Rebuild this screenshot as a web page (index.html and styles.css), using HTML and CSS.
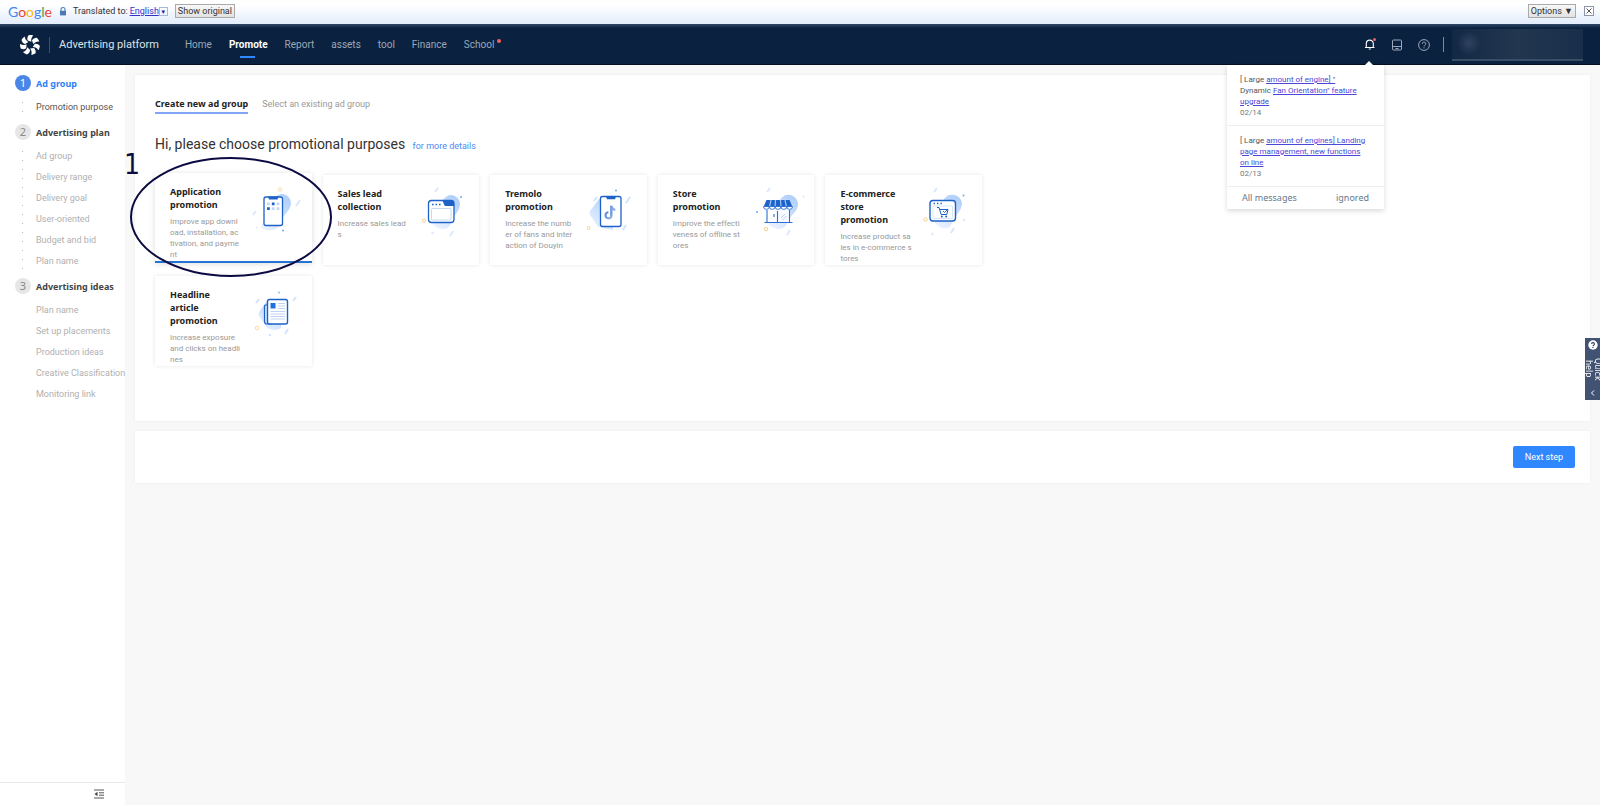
FILE: index.html
```html
<!DOCTYPE html>
<html lang="en">
<head>
    <meta charset="UTF-8">
    <title>Advertising platform</title>
    <link rel="stylesheet" href="styles.css">
</head>
<body>
    <div class="translate-bar">
        <span class="google"><span class="g-blue">G</span><span class="g-red">o</span><span class="g-yellow">o</span><span class="g-blue">g</span><span class="g-green">l</span><span class="g-red">e</span></span>
        <svg class="lock" viewBox="0 0 8 9"><path d="M2 4V2.500a2 2 0 0 1 4 0V4" fill="none" stroke="#5b86bd" stroke-width="1.200"/><rect x="1" y="3.800" width="6" height="4.600" fill="#4a79b5"/></svg>
        <span>Translated to:</span>
        <a class="language" href="#">English</a><button class="arrow" aria-label="Choose language">▼</button>
        <button class="gray-button">Show original</button>
        <button class="gray-button options">Options ▼</button>
        <button class="close" aria-label="Close"><svg viewBox="0 0 10 10"><rect x=".5" y=".5" width="9" height="9" fill="#fff" stroke="#8b96a8"/><path d="M2.500 2.500l5 5M7.500 2.500l-5 5" stroke="#555"/></svg></button>
    </div>

    <header class="header">
        <svg class="logo" viewBox="0 0 20 20">
            <defs><path id="blade" d="M8.600.2C10 0 11.800 0 13.200.6 11.400 2.400 10.900 4.500 11.400 6.800L7.700 5.600C7 3.600 7.300 1.700 8.600.2z"/></defs>
            <g fill="#fff">
                <use href="#blade"/>
                <use href="#blade" transform="rotate(51 10 10)"/>
                <use href="#blade" transform="rotate(103 10 10)"/>
                <use href="#blade" transform="rotate(154 10 10)"/>
                <use href="#blade" transform="rotate(206 10 10)"/>
                <use href="#blade" transform="rotate(257 10 10)"/>
                <use href="#blade" transform="rotate(309 10 10)"/>
            </g>
        </svg>
        <span class="brand">Advertising platform</span>
        <nav class="nav">
            <a href="#">Home</a>
            <a class="active" href="#">Promote</a>
            <a href="#">Report</a>
            <a href="#">assets</a>
            <a href="#">tool</a>
            <a href="#">Finance</a>
            <a class="has-dot" href="#">School</a>
        </nav>
        <div class="tools">
            <div class="bell">
                <button class="icon-button" aria-label="Messages">
                    <svg viewBox="0 0 12 12" fill="none" stroke="#fff" stroke-width="1.100"><path d="M1 9.500h9.500M2.300 9.500V5.600a3.500 3.500 0 0 1 7 0v3.900M4.800 11h2"/><circle cx="10.500" cy="1.500" r="1.500" fill="#f0605d" stroke="none"/></svg>
                </button>
                <div class="messages">
                    <div class="message">
                        [ Large <a href="#">amount of engine] "</a><br>Dynamic <a href="#">Fan Orientation" feature<br>upgrade</a>
                        <time>02/14</time>
                    </div>
                    <div class="message">
                        [ Large <a href="#">amount of engines] Landing<br>page management, new functions<br>on line</a>
                        <time>02/13</time>
                    </div>
                    <div class="messages-footer">
                        <a href="#">All messages</a>
                        <a href="#">ignored</a>
                    </div>
                </div>
            </div>
            <button class="icon-button" aria-label="Library">
                <svg viewBox="0 0 12 12" fill="none" stroke="#9ca8b7"><rect x="1.500" y="1" width="9" height="10" rx="1"/><path d="M1.500 7.500h9M4.500 9.500h3"/></svg>
            </button>
            <button class="icon-button" aria-label="Help">
                <svg viewBox="0 0 12 12" fill="none" stroke="#9ca8b7"><circle cx="6" cy="6" r="5.400"/><path d="M4.300 4.900a1.700 1.700 0 1 1 2.500 1.400c-.6.300-.8.600-.8 1.100M6 8.300v1"/></svg>
            </button>
            <div class="account"></div>
        </div>
    </header>

    <div class="layout">
        <aside class="sidebar">
            <div class="steps">
                <section class="step current">
                    <h2><span class="badge">1</span>Ad group</h2>
                    <ul class="dotted">
                        <li class="selected">Promotion purpose</li>
                    </ul>
                </section>
                <section class="step">
                    <h2><span class="badge">2</span>Advertising plan</h2>
                    <ul class="dotted">
                        <li>Ad group</li>
                        <li>Delivery range</li>
                        <li>Delivery goal</li>
                        <li>User-oriented</li>
                        <li>Budget and bid</li>
                        <li>Plan name</li>
                    </ul>
                </section>
                <section class="step">
                    <h2><span class="badge">3</span>Advertising ideas</h2>
                    <ul>
                        <li>Plan name</li>
                        <li>Set up placements</li>
                        <li>Production ideas</li>
                        <li>Creative Classification</li>
                        <li>Monitoring link</li>
                    </ul>
                </section>
            </div>
            <div class="sidebar-footer">
                <button class="collapse" aria-label="Collapse menu">
                    <svg viewBox="0 0 10 10"><path d="M0 1h10M5 3.800h5M5 6.200h5M0 9h10" stroke="#555"/><path d="M3.500 2.800v4.400L.5 5z" fill="#444"/></svg>
                </button>
            </div>
        </aside>

        <main class="content">
            <section class="panel">
                <div class="tabs">
                    <button class="tab active">Create new ad group</button>
                    <button class="tab">Select an existing ad group</button>
                </div>
                <h1>Hi, please choose promotional purposes <a href="#">for more details</a></h1>

                <ul class="cards">
                    <li class="lifted">
                        <button class="card selected">
                            <span class="card-text">
                                <strong>Application<br>promotion</strong>
                                <span>Improve app downl<br>oad, installation, ac<br>tivation, and payme<br>nt</span>
                            </span>
                            <svg viewBox="0 0 50 50" fill="none">
                                <defs>
                                    <linearGradient id="haze" x1="0" y1="1" x2=".6" y2="0"><stop offset="0" stop-color="#f0f6ff"/><stop offset="1" stop-color="#b4d1fb"/></linearGradient>
                                </defs>
                                <path d="M22 14a9 9 0 0 1 17 4c0 8-9 12-11 21-2 7-15 9-19 3z" fill="url(#haze)"/>
                                <path d="M1 30l3-4M44 21l4-6M4 43l1-1" stroke="#dbe8fc" stroke-width="2"/>
                                <circle cx="28" cy="4.500" r="1.700" stroke="#fadca6"/>
                                <circle cx="31" cy="45.500" r="1" fill="#6faaf3"/>
                                <rect x="12" y="12" width="18.500" height="28.500" rx="2" fill="#fff" stroke="#1c62c8" stroke-width="1.300"/>
                                <path d="M16 11.500h10.500l-1 3h-8.500z" fill="#1c62c8"/>
                                <path d="M15 17.500h2.800v2.800H15zM24.600 17.500h2.800v2.800h-2.800zM19.800 22.300h2.800v2.800h-2.800zM24.600 22.300h2.800v2.800h-2.800z" fill="#c3d8f5"/>
                                <path d="M19.800 17.500h2.800v2.800h-2.800zM15 22.300h2.800v2.800H15z" fill="#1c62c8"/>
                            </svg>
                        </button>
                        <div class="mark">1</div>
                        <svg class="ring" viewBox="0 0 204 122"><ellipse cx="102" cy="61" rx="100" ry="59" fill="none" stroke="#0b0b42" stroke-width="2"/></svg>
                    </li>
                    <li>
                        <button class="card">
                            <span class="card-text">
                                <strong>Sales lead<br>collection</strong>
                                <span>Increase sales lead<br>s</span>
                            </span>
                            <svg viewBox="0 0 50 50" fill="none">
                                <path d="M23 13a9 9 0 0 1 17 4c0 8-7 11-9 19-2 8-13 8-18 1z" fill="url(#haze)"/>
                                <path d="M15 5l3-4M30 49l3-5M12 47l1-2" stroke="#dbe8fc" stroke-width="2"/>
                                <circle cx="4" cy="33.500" r="1.700" stroke="#f8cf8c"/>
                                <circle cx="41" cy="10" r="1" fill="#6faaf3"/>
                                <rect x="8.500" y="13.500" width="25.500" height="22" rx="3" fill="#fff" stroke="#1c62c8" stroke-width="1.300"/>
                                <path d="M22.500 13.500H31a3 3 0 0 1 3 3V19h-8c-2 0-2-2-3.500-5.500z" fill="#1c62c8"/>
                                <path d="M12 17.500h1.600M15.500 17.500h1.600M19 17.500h1.600" stroke="#1c62c8" stroke-width="1.600"/>
                                <rect x="11.500" y="21.500" width="19.500" height="11.500" rx="1" stroke="#b9cff0" stroke-width=".8"/>
                            </svg>
                        </button>
                    </li>
                    <li>
                        <button class="card">
                            <span class="card-text">
                                <strong>Tremolo<br>promotion</strong>
                                <span>Increase the numb<br>er of fans and inter<br>action of Douyin</span>
                            </span>
                            <svg viewBox="0 0 50 50" fill="none">
                                <path d="M13 11L3 24q-1 2 0 4l8 12 15 3V11z" fill="url(#haze)"/>
                                <path d="M7 14l3-4M39 16l4-6M36 43l3-5" stroke="#d3e3fc" stroke-width="2"/>
                                <circle cx="1.500" cy="41" r="1.500" stroke="#f8cf8c"/>
                                <circle cx="29" cy="3.500" r="1" fill="#6faaf3"/>
                                <rect x="13.500" y="9.500" width="20.500" height="30" rx="2" fill="#fff" stroke="#1c62c8" stroke-width="1.300"/>
                                <path d="M19 9.500h10l-1 2.800h-8z" fill="#1c62c8"/>
                                <path d="M24.500 19v9.300a3 3 0 1 1-3-3M24.500 19c.3 2.400 1.600 3.600 3.800 3.800" stroke="#8aaee5" stroke-width="2.200"/>
                                <path d="M23.900 18.500v10M21 25.200a3 3 0 0 0-1 5.500" stroke="#3c74cf" stroke-width=".8"/>
                            </svg>
                        </button>
                    </li>
                    <li>
                        <button class="card">
                            <span class="card-text">
                                <strong>Store<br>promotion</strong>
                                <span>Improve the effecti<br>veness of offline st<br>ores</span>
                            </span>
                            <svg viewBox="0 0 50 50" fill="none">
                                <path d="M25 13a9.500 9.500 0 0 1 18 4c0 8-8 11-11 19-2 8-13 8-19 1z" fill="url(#haze)"/>
                                <path d="M12 5l3-4M32 48l3-5M48 10l1-1" stroke="#dbe8fc" stroke-width="2"/>
                                <circle cx="11" cy="42" r="1.700" stroke="#f8cf8c"/>
                                <circle cx="2" cy="25" r="1" fill="#6faaf3"/>
                                <path d="M12 22h23v13H12z" fill="#fff" fill-opacity=".85"/>
                                <path d="M12 23v12M22.500 24v11M34.500 23v12M9.500 35.500h28M19 27v3" stroke="#2b6fd3" stroke-width="1.100"/>
                                <path d="M26 31l4-4M27.500 33l4-4" stroke="#9fc0f0" stroke-width=".8"/>
                                <path d="M11.500 13h23l3 7h-29z" fill="#1c62c8"/>
                                <path d="M16 13l-1.500 7M20.500 13l-.5 7M25.500 13l.5 7M30 13l1.500 7" stroke="#9fc5fb" stroke-width="1.200"/>
                                <path d="M8.500 19.500a2.900 2.900 0 0 0 5.800 0 2.900 2.900 0 0 0 5.800 0 2.900 2.900 0 0 0 5.800 0 2.900 2.900 0 0 0 5.800 0 2.900 2.900 0 0 0 5.800 0z" fill="#fff" stroke="#2b6fd3" stroke-width=".9"/>
                            </svg>
                        </button>
                    </li>
                    <li>
                        <button class="card">
                            <span class="card-text">
                                <strong>E-commerce<br>store<br>promotion</strong>
                                <span>Increase product sa<br>les in e-commerce s<br>tores</span>
                            </span>
                            <svg viewBox="0 0 50 50" fill="none">
                                <path d="M22 12a10 10 0 0 1 18 4c0 8-7 12-10 20-2 7-12 7-17 0z" fill="url(#haze)"/>
                                <path d="M12 5l3-4M29 46l3-5M10 48l1-2M41 34l2-2" stroke="#dbe8fc" stroke-width="2"/>
                                <circle cx="3.500" cy="32.500" r="1.700" stroke="#f8cf8c"/>
                                <circle cx="41.500" cy="8.500" r="1" fill="#6faaf3"/>
                                <rect x="8" y="13.500" width="25.500" height="20.500" rx="3" fill="#fff" stroke="#1c62c8" stroke-width="1.400"/>
                                <path d="M11.500 16.500h1.400M15 16.500h1.400M18.500 16.500h1.400" stroke="#1c62c8" stroke-width="1.400"/>
                                <rect x="11" y="19" width="19.500" height="12.500" rx="1" stroke="#cfdff5" stroke-width=".8"/>
                                <path d="M15 20.500h2l2.200 7h5.600l1.200-5h-8M21 24l1.500 1.500L25 23" stroke="#1c62c8"/>
                                <circle cx="19.800" cy="29.500" r="1" fill="#1c62c8"/><circle cx="24.200" cy="29.500" r="1" fill="#1c62c8"/>
                            </svg>
                        </button>
                    </li>
                    <li>
                        <button class="card">
                            <span class="card-text">
                                <strong>Headline<br>article<br>promotion</strong>
                                <span>Increase exposure<br>and clicks on headli<br>nes</span>
                            </span>
                            <svg viewBox="0 0 50 50" fill="none">
                                <path d="M15 13L7 24q-1 2 0 4l8 12q8 4 14 0V13z" fill="url(#haze)"/>
                                <path d="M4 15l3-4M41 13l3-4M33 46l3-5M18 48v-2" stroke="#d3e3fc" stroke-width="2"/>
                                <circle cx="5" cy="40" r="1.700" stroke="#fadca6"/>
                                <circle cx="27" cy="4.500" r="1" fill="#8abdf6"/>
                                <path d="M16 17h-2.500a1 1 0 0 0-1 1v15.500a2.500 2.500 0 0 0 2.500 2.500h4V17z" fill="#dbe9fd" stroke="#1c62c8" stroke-width="1.200"/>
                                <rect x="15.500" y="11.500" width="20" height="24.500" rx="2" fill="#fff" stroke="#1c62c8" stroke-width="1.400"/>
                                <path d="M18.500 15h5v5.500h-5z" fill="#1c72e0"/>
                                <path d="M26 15.500h7M26 18h7M26 20.500h7M18.500 23.500H33M18.500 26H33M18.500 28.500H33M18.500 31H33" stroke="#b9cff0" stroke-width=".9"/>
                            </svg>
                        </button>
                    </li>
                </ul>
            </section>

            <section class="panel actions">
                <button class="next">Next step</button>
            </section>
        </main>
    </div>

    <button class="quick-help">
        <svg viewBox="0 0 10 10"><circle cx="5" cy="5" r="4.700" fill="#fff"/><path d="M3.600 4a1.400 1.400 0 1 1 2 1.300c-.4.200-.6.400-.6.900M5 7v1" fill="none" stroke="#33466a" stroke-width="1.100"/></svg>
        <span>Quick<br>help</span>
        <svg class="chevron" viewBox="0 0 10 10"><path d="M6 2.500L3.500 5 6 7.500" fill="none" stroke="#fff"/></svg>
    </button>
</body>
</html>
```

FILE: styles.css
```css
* {
    box-sizing: border-box;
}

body {
    margin: 0;
    min-height: 100vh;
    display: flex;
    flex-direction: column;
    background-color: #f8f8f8;
    color: #333;
    font-family: Roboto, sans-serif;
    font-size: 9px;
}

button {
    font: inherit;
    color: inherit;
    padding: 0;
    border: none;
    background: none;
    cursor: pointer;
}

a {
    color: inherit;
    text-decoration: none;
}

ul {
    list-style: none;
    margin: 0;
    padding: 0;
}

svg {
    display: block;
    flex: none;
}

/* translate bar */
.translate-bar {
    height: 24px;
    display: flex;
    align-items: center;
    padding: 0 6px 2px 8px;
    background: linear-gradient(#fff 20%, #e2ecfb);
    font-size: 9px;
    color: #333;
}

.google {
    font-family: Lato, sans-serif;
    font-size: 14px;
    margin-right: 7px;
}

.g-blue { color: #4285f4; }
.g-red { color: #ea4335; }
.g-yellow { color: #fbbc05; }
.g-green { color: #34a853; }

.lock {
    width: 8px;
    height: 9px;
    margin-right: 6px;
}

.language {
    color: #33c;
    text-decoration: underline;
    margin-left: 2px;
}

.arrow {
    width: 9px;
    height: 9px;
    margin: 0 7px 0 0;
    border: 1px solid #a9b9de;
    color: #22a;
    font-size: 6px;
    line-height: 7px;
}

.gray-button {
    height: 14px;
    padding: 0 2px;
    border: 1px solid #aaa;
    background: linear-gradient(#f8f8f8, #e2e2e2);
}

.options {
    margin-left: auto;
}

.close svg {
    width: 10px;
    height: 10px;
    margin-left: 8px;
}

/* header */
.header {
    height: 41px;
    display: flex;
    align-items: center;
    padding: 2px 17px 0 20px;
    background: linear-gradient(#2f4866, #0a2240 4px);
    border-bottom: 1px solid #03101f;
    color: #9ca8b7;
    font-size: 10px;
}

.logo {
    width: 20px;
    height: 20px;
}

.brand {
    margin-left: 9px;
    padding-left: 9px;
    border-left: 1px solid #3d5069;
    color: #dde2e8;
    font-size: 11px;
    line-height: 16px;
}

.nav {
    display: flex;
    gap: 17px;
    margin-left: 26px;
}

.nav a {
    position: relative;
    line-height: 38px;
}

.nav .active {
    color: #fff;
    font-weight: bold;
}

.nav .active::after {
    content: "";
    position: absolute;
    left: 50%;
    bottom: 6px;
    width: 15px;
    height: 2px;
    margin-left: -8px;
    background-color: #2f88ff;
}

.nav .has-dot::after {
    content: "";
    position: absolute;
    top: 13px;
    right: -7px;
    width: 4px;
    height: 4px;
    border-radius: 50%;
    background-color: #f0605d;
}

.tools {
    display: flex;
    align-items: center;
    gap: 15px;
    margin-left: auto;
}

.icon-button svg {
    width: 12px;
    height: 12px;
}

.account {
    position: relative;
    width: 131px;
    height: 32px;
    margin-left: 7px;
    background: radial-gradient(circle at 17px 14px, #30435e, transparent 12px), linear-gradient(90deg, #122844, #22364f 50%, #182e4a);
    border-bottom: 2px solid #3a4d66;
}

.account::before {
    content: "";
    position: absolute;
    left: -9px;
    top: 8px;
    width: 1px;
    height: 15px;
    background-color: #7c8a9c;
}

.bell {
    position: relative;
}

.messages {
    position: absolute;
    top: 27px;
    right: -8px;
    width: 157px;
    background-color: #fff;
    box-shadow: 0 2px 5px rgba(0, 0, 0, 0.15);
    color: #555;
    font-size: 8px;
    line-height: 11px;
    z-index: 2;
}

.messages::before {
    content: "";
    position: absolute;
    top: -4px;
    right: 11px;
    border: 4px solid transparent;
    border-top: none;
    border-bottom-color: #fff;
}

.message {
    padding: 9px 0 7px 13px;
    border-bottom: 1px solid #eee;
    white-space: nowrap;
}

.message a {
    color: #4a48d8;
    text-decoration: underline;
}

.message time {
    display: block;
    color: #777;
}

.messages-footer {
    display: flex;
    justify-content: space-between;
    padding: 0 15px;
    color: #66798c;
    font-family: "Noto Sans", sans-serif;
    font-size: 9px;
    line-height: 22px;
}

/* sidebar */
.layout {
    flex: 1;
    display: flex;
}

.sidebar {
    width: 125px;
    display: flex;
    flex-direction: column;
    background-color: #fff;
}

.steps {
    flex: 1;
    padding-top: 5px;
}

.step {
    margin-bottom: 2px;
}

.step h2 {
    display: flex;
    align-items: center;
    gap: 5px;
    height: 26px;
    margin: 0;
    padding-left: 15px;
    font-family: "Noto Sans", sans-serif;
    font-size: 9px;
    color: #444;
}

.badge {
    width: 16px;
    height: 16px;
    border-radius: 50%;
    background-color: #e6e6e6;
    color: #888;
    font-weight: normal;
    font-size: 11px;
    line-height: 16px;
    text-align: center;
}

.current h2 {
    color: #2f80f5;
}

.current .badge {
    background-color: #4a86e8;
    color: #fff;
}

.step li {
    height: 21px;
    line-height: 22px;
    padding-left: 36px;
    color: #b0b0b0;
    white-space: nowrap;
}

.step .selected {
    color: #555;
}

.dotted {
    background: linear-gradient(#bbb 1px, transparent 1px) 22px 6px / 1px 9px repeat-y;
}

.sidebar-footer {
    display: flex;
    justify-content: flex-end;
    padding: 6px 21px 6px;
    border-top: 1px solid #e8ebee;
}

.collapse svg {
    width: 10px;
    height: 10px;
}

/* content */
.content {
    flex: 1;
    padding: 10px;
}

.panel {
    padding: 20px;
    background-color: #fff;
    box-shadow: 0 0 2px rgba(0, 0, 0, 0.06);
}

.tabs {
    display: flex;
    gap: 14px;
}

.tab {
    height: 19px;
    color: #999;
    border-bottom: 2px solid transparent;
}

.tab.active {
    color: #222;
    font-family: "Noto Sans", sans-serif;
    font-weight: bold;
    border-bottom-color: #7fa6f8;
}

h1 {
    margin: 18px 0 17px;
    font-size: 14px;
    line-height: 24px;
    font-weight: normal;
}

h1 a {
    margin-left: 4px;
    color: #4d8af5;
    font-size: 9px;
}

.cards {
    display: grid;
    grid-template-columns: repeat(5, 1fr);
    gap: 11px;
    max-width: 827px;
    padding-bottom: 35px;
    box-sizing: content-box;
}

.lifted {
    position: relative;
    top: -2px;
}

.card {
    width: 100%;
    height: 90px;
    display: flex;
    align-items: flex-start;
    padding: 12px 0 0 15px;
    overflow: hidden;
    background-color: #fff;
    box-shadow: 0 0 4px rgba(0, 0, 0, 0.1);
    text-align: left;
}

.card.selected {
    border-bottom: 2px solid #2474d6;
    box-shadow: 0 1px 6px rgba(0, 0, 0, 0.14);
}

.card svg {
    width: 50px;
    height: 50px;
}

.card-text {
    width: 82px;
    white-space: nowrap;
}

.card-text strong,
.card-text span {
    display: block;
}

.card-text strong {
    color: #222;
    font-family: "Noto Sans", sans-serif;
    font-size: 9px;
    line-height: 13px;
}

.card-text span {
    margin-top: 5px;
    color: #999;
    font-size: 8px;
    line-height: 11px;
}

/* hand drawn callout over the first card */
.mark {
    position: absolute;
    left: -31px;
    top: -26px;
    color: #0b0b42;
    font-family: "DejaVu Sans Condensed", "DejaVu Sans", sans-serif;
    font-size: 28px;
    line-height: 36px;
}

.ring {
    position: absolute;
    left: -26px;
    top: -17px;
    width: 204px;
    height: 122px;
    pointer-events: none;
}

.actions {
    display: flex;
    justify-content: flex-end;
    margin-top: 10px;
    padding: 15px;
}

.next {
    height: 22px;
    padding: 0 12px;
    border-radius: 2px;
    background-color: #2f88ff;
    color: #fff;
}

.quick-help {
    position: fixed;
    right: 0;
    top: 338px;
    width: 15px;
    height: 62px;
    display: flex;
    flex-direction: column;
    align-items: center;
    justify-content: space-between;
    padding: 2px 0;
    background-color: #415273;
    color: #fff;
    font-family: "DejaVu Sans", sans-serif;
    font-size: 8px;
    line-height: 9px;
}

.quick-help svg {
    width: 10px;
    height: 10px;
}

.quick-help span {
    writing-mode: vertical-rl;
}
```
